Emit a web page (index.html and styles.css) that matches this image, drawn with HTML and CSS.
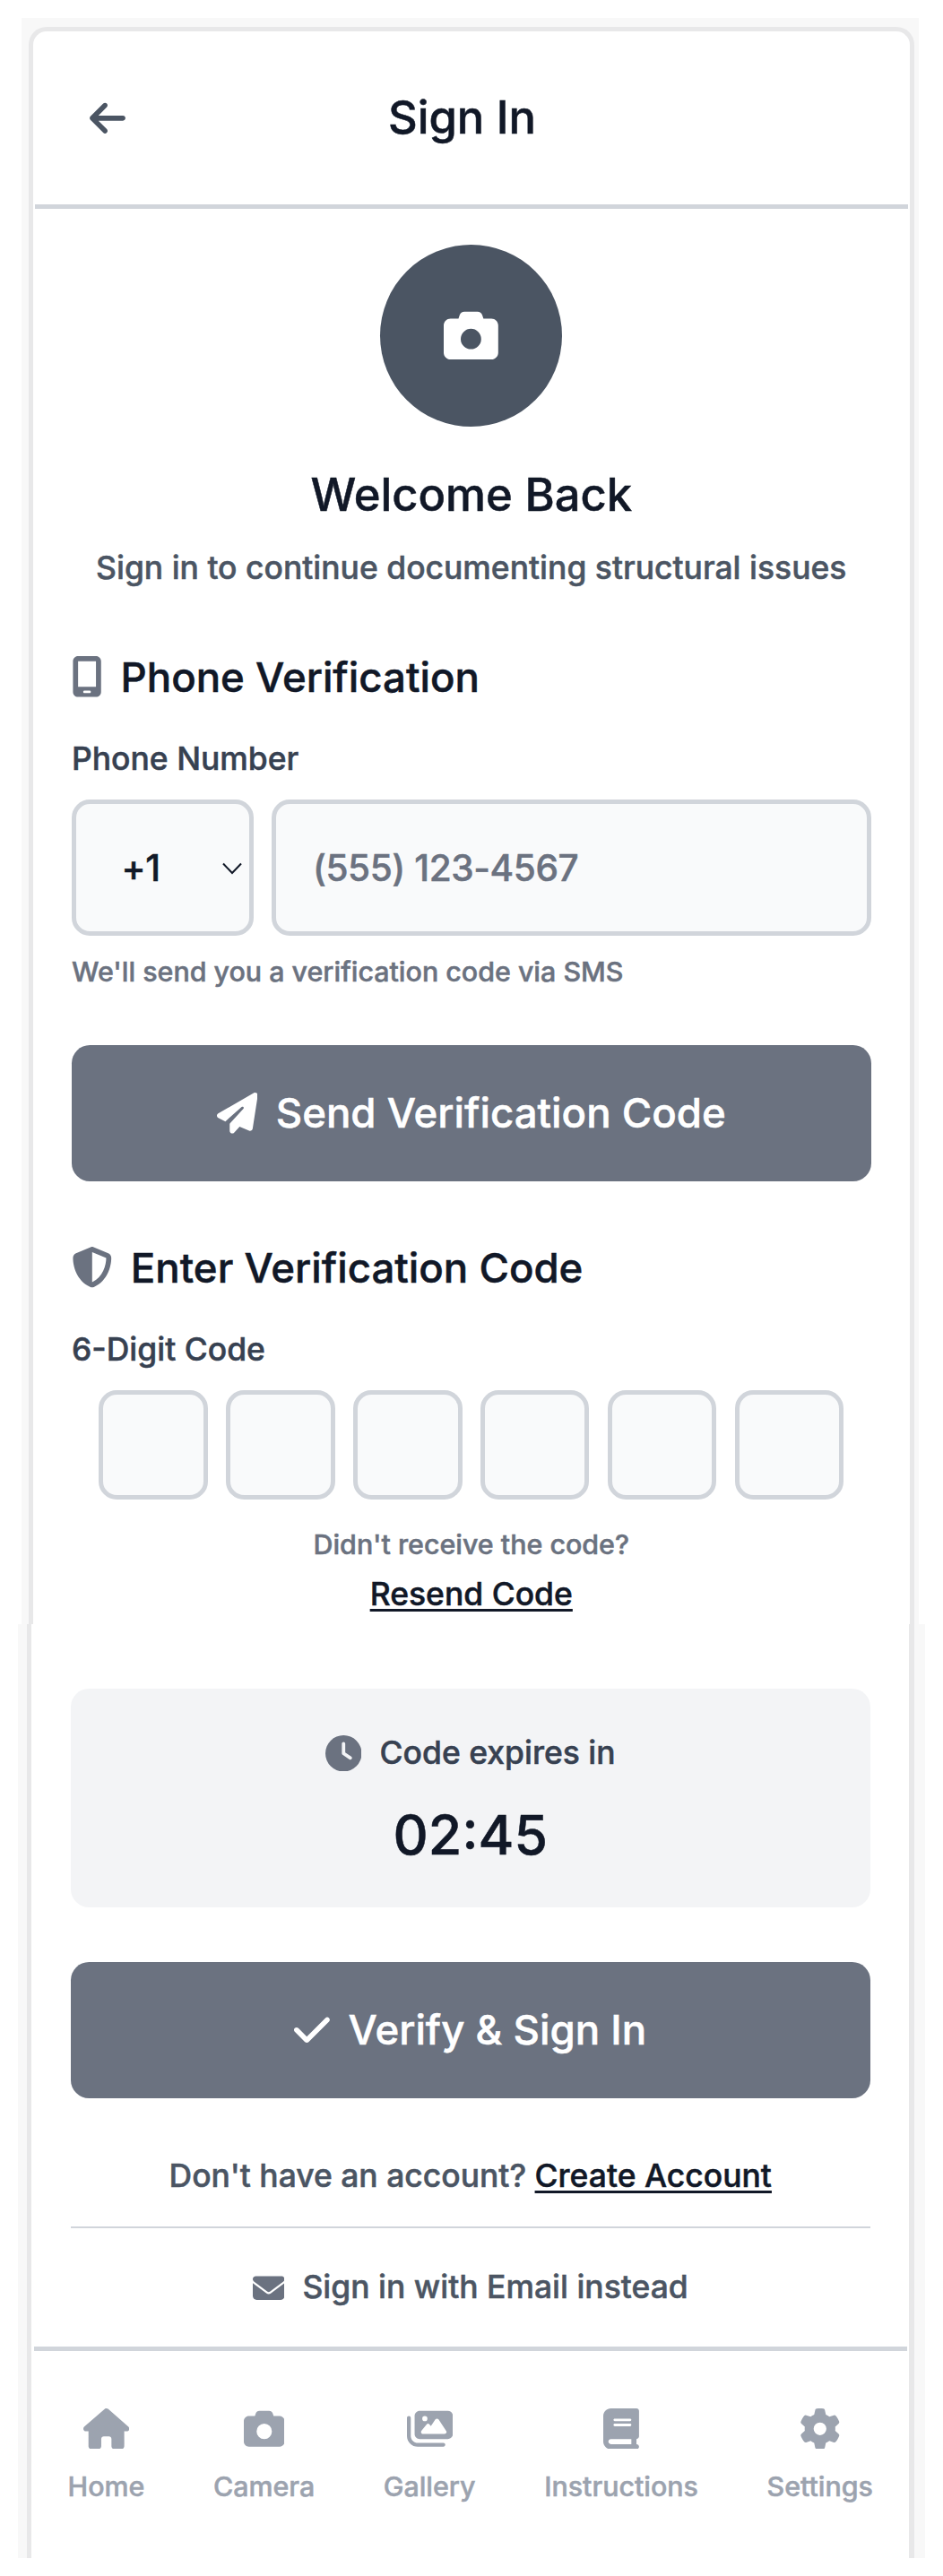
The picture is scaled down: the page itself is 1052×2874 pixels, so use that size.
FILE: index.html
```html
<!DOCTYPE html>
<html lang="en">
<head>
<meta charset="utf-8">
<title>Sign In</title>
<link rel="stylesheet" href="styles.css">
</head>
<body>
<div class="shell shell-upper">
  <div class="screen screen-upper">
    <header class="header">
      <svg class="icon icon-back" viewBox="0 0 448 512"><path d="M9.4 233.4c-12.5 12.5-12.5 32.8 0 45.3l160 160c12.5 12.5 32.8 12.5 45.3 0s12.5-32.8 0-45.3L109.2 288 416 288c17.7 0 32-14.3 32-32s-14.3-32-32-32l-306.7 0L214.6 118.6c12.5-12.5 12.5-32.8 0-45.3s-32.8-12.5-45.3 0l-160 160z"/></svg>
      <h1 class="header-title">Sign In</h1>
    </header>
    <main class="content">
      <section class="welcome">
        <div class="avatar">
          <svg class="icon icon-avatar" viewBox="0 0 512 512"><path d="M149.1 64.8L138.7 96H64C28.7 96 0 124.7 0 160V416c0 35.3 28.7 64 64 64H448c35.3 0 64-28.7 64-64V160c0-35.3-28.7-64-64-64H373.3L362.9 64.8C356.4 45.2 338.1 32 317.4 32H194.6c-20.7 0-39 13.2-45.5 32.8zM256 192a96 96 0 1 1 0 192 96 96 0 1 1 0-192z"/></svg>
        </div>
        <h2 class="welcome-title">Welcome Back</h2>
        <p class="welcome-text">Sign in to continue documenting structural issues</p>
      </section>

      <section class="phone">
        <h3 class="section-title">
          <svg class="icon icon-phone" viewBox="0 0 384 512"><path d="M16 64C16 28.7 44.7 0 80 0H304c35.3 0 64 28.7 64 64V448c0 35.3-28.7 64-64 64H80c-35.3 0-64-28.7-64-64V64zM144 448c0 8.8 7.2 16 16 16h64c8.8 0 16-7.2 16-16s-7.2-16-16-16H160c-8.8 0-16 7.2-16 16zM304 64H80V384H304V64z"/></svg>
          <span>Phone Verification</span>
        </h3>
        <label class="label" for="phone">Phone Number</label>
        <div class="phone-row">
          <div class="select-wrap">
            <select class="field select"><option>+1</option></select>
            <svg class="chevron" viewBox="0 0 22 14"><path d="M1 1.5 11 12 21 1.5"/></svg>
          </div>
          <input class="field input" id="phone" type="tel" placeholder="(555) 123-4567">
        </div>
        <p class="hint">We'll send you a verification code via SMS</p>
        <button class="button">
          <svg class="icon icon-send" viewBox="0 0 512 512"><path d="M498.1 5.6c10.1 7 15.4 19.1 13.5 31.2l-64 416c-1.5 9.7-7.4 18.2-16 23s-18.9 5.4-28 1.6L284 427.7l-68.5 74.1c-8.9 9.7-22.9 12.9-35.2 8.1S160 493.2 160 480V396.4c0-4 1.5-7.8 4.2-10.7L331.8 202.8c5.8-6.3 5.6-16-.4-22s-15.7-6.4-22-.7L106 360.8 17.7 316.6C7.1 311.3 .3 300.7 0 288.9s5.9-22.8 16.1-28.7l448-256c10.7-6.1 23.9-5.5 34 1.4z"/></svg>
          <span>Send Verification Code</span>
        </button>
      </section>

      <section class="code">
        <h3 class="section-title">
          <svg class="icon icon-shield" viewBox="0 0 512 512"><path d="M256 0c4.6 0 9.2 1 13.4 2.9L457.7 82.8c22 9.3 38.4 31 38.3 57.2c-.5 99.2-41.3 280.7-213.6 363.2c-16.7 8-36.1 8-52.8 0C57.3 420.7 16.5 239.2 16 140c-.1-26.2 16.3-47.9 38.3-57.2L242.7 2.9C246.8 1 251.4 0 256 0zm0 66.8V444.8C394 378 431.1 230.1 432 141.4L256 66.8l0 0z"/></svg>
          <span>Enter Verification Code</span>
        </h3>
        <label class="label">6-Digit Code</label>
        <div class="digits">
          <input class="digit" maxlength="1">
          <input class="digit" maxlength="1">
          <input class="digit" maxlength="1">
          <input class="digit" maxlength="1">
          <input class="digit" maxlength="1">
          <input class="digit" maxlength="1">
        </div>
        <p class="resend-hint">Didn't receive the code?</p>
        <p class="resend"><a class="link">Resend Code</a></p>
      </section>
    </main>
  </div>
</div>

<div class="shell shell-lower">
  <div class="screen screen-lower">
    <section class="content content-lower">
      <div class="timer">
        <div class="timer-label">
          <svg class="icon icon-clock" viewBox="0 0 512 512"><path d="M256 0a256 256 0 1 1 0 512A256 256 0 1 1 256 0zM232 120V256c0 8 4 15.5 10.7 20l96 64c11 7.4 25.9 4.4 33.3-6.7s4.4-25.9-6.7-33.3L280 243.2V120c0-13.3-10.7-24-24-24s-24 10.7-24 24z"/></svg>
          <span>Code expires in</span>
        </div>
        <div class="timer-value">02:45</div>
      </div>
      <button class="button">
        <svg class="icon icon-check" viewBox="0 0 448 512"><path d="M438.6 105.4c12.5 12.5 12.5 32.8 0 45.3l-256 256c-12.5 12.5-32.8 12.5-45.3 0l-128-128c-12.5-12.5-12.5-32.8 0-45.3s32.8-12.5 45.3 0L160 338.7 393.4 105.4c12.5-12.5 32.8-12.5 45.3 0z"/></svg>
        <span>Verify &amp; Sign In</span>
      </button>
      <p class="signup">Don't have an account? <a class="link">Create Account</a></p>
      <div class="email">
        <svg class="icon icon-mail" viewBox="0 0 512 512"><path d="M48 64C21.5 64 0 85.5 0 112c0 15.1 7.1 29.3 19.2 38.4L236.8 313.6c11.4 8.5 27 8.5 38.4 0L492.8 150.4c12.1-9.1 19.2-23.3 19.2-38.4c0-26.5-21.5-48-48-48H48zM0 176V384c0 35.3 28.7 64 64 64H448c35.3 0 64-28.7 64-64V176L294.4 339.2c-22.8 17.1-54 17.1-76.8 0L0 176z"/></svg>
        <span>Sign in with Email instead</span>
      </div>
    </section>
    <nav class="nav">
      <div class="nav-item">
        <svg class="icon icon-nav icon-wide" viewBox="0 0 576 512"><path d="M575.8 255.5c0 18-15 32.1-32 32.1h-32l.7 160.2c0 2.7-.2 5.4-.5 8.1V472c0 22.1-17.9 40-40 40H456c-1.1 0-2.2 0-3.3-.1c-1.4 .1-2.8 .1-4.2 .1H416 392c-22.1 0-40-17.9-40-40V448 384c0-17.7-14.3-32-32-32H256c-17.7 0-32 14.3-32 32v64 24c0 22.1-17.9 40-40 40H160 128.1c-1.5 0-3-.1-4.5-.2c-1.2 .1-2.4 .2-3.6 .2H104c-22.1 0-40-17.9-40-40V360c0-.9 0-1.9 .1-2.8V287.6H32c-18 0-32-14-32-32.1c0-9 3-17 10-24L266.4 8c7-7 15-8 22-8s15 2 21 7L564.8 231.5c8 7 12 15 11 24z"/></svg>
        <span>Home</span>
      </div>
      <div class="nav-item">
        <svg class="icon icon-nav" viewBox="0 0 512 512"><path d="M149.1 64.8L138.7 96H64C28.7 96 0 124.7 0 160V416c0 35.3 28.7 64 64 64H448c35.3 0 64-28.7 64-64V160c0-35.3-28.7-64-64-64H373.3L362.9 64.8C356.4 45.2 338.1 32 317.4 32H194.6c-20.7 0-39 13.2-45.5 32.8zM256 192a96 96 0 1 1 0 192 96 96 0 1 1 0-192z"/></svg>
        <span>Camera</span>
      </div>
      <div class="nav-item">
        <svg class="icon icon-nav icon-wide" viewBox="0 0 576 512"><path d="M160 32c-35.3 0-64 28.7-64 64V320c0 35.3 28.7 64 64 64H512c35.3 0 64-28.7 64-64V96c0-35.3-28.7-64-64-64H160zM396 138.7l96 144c4.9 7.4 5.4 16.8 1.2 24.6S480.9 320 472 320H328 280 200c-9.2 0-17.6-5.3-21.6-13.6s-2.9-18.2 2.9-25.4l64-80c4.6-5.7 11.4-9 18.7-9s14.2 3.3 18.7 9l17.3 21.6 56-84C360.5 132 368 128 376 128s15.5 4 20 10.7zM192 128a32 32 0 1 1 64 0 32 32 0 1 1 -64 0zM48 120c0-13.3-10.7-24-24-24S0 106.7 0 120V344c0 75.1 60.9 136 136 136H456c13.3 0 24-10.7 24-24s-10.7-24-24-24H136c-48.6 0-88-39.4-88-88V120z"/></svg>
        <span>Gallery</span>
      </div>
      <div class="nav-item">
        <svg class="icon icon-nav icon-narrow" viewBox="0 0 448 512"><path d="M96 0C43 0 0 43 0 96V416c0 53 43 96 96 96H384h32c17.7 0 32-14.3 32-32s-14.3-32-32-32V384c17.7 0 32-14.3 32-32V32c0-17.7-14.3-32-32-32H384 96zm0 384H352v64H96c-17.7 0-32-14.3-32-32s14.3-32 32-32zm32-240c0-8.8 7.2-16 16-16H336c8.8 0 16 7.2 16 16s-7.2 16-16 16H144c-8.8 0-16-7.2-16-16zm16 48H336c8.8 0 16 7.2 16 16s-7.2 16-16 16H144c-8.8 0-16-7.2-16-16s7.2-16 16-16z"/></svg>
        <span>Instructions</span>
      </div>
      <div class="nav-item">
        <svg class="icon icon-nav" viewBox="0 0 512 512"><path d="M495.9 166.6c3.2 8.7 .5 18.4-6.4 24.6l-43.3 39.4c1.1 8.3 1.7 16.8 1.7 25.4s-.6 17.1-1.7 25.4l43.3 39.4c6.9 6.2 9.6 15.9 6.4 24.6c-4.4 11.9-9.7 23.3-15.8 34.3l-4.7 8.1c-6.6 11-14 21.4-22.1 31.2c-5.9 7.2-15.7 9.6-24.5 6.8l-55.7-17.7c-13.4 10.3-28.2 18.9-44 25.4l-12.5 57.1c-2 9.1-9 16.3-18.2 17.8c-13.8 2.3-28 3.5-42.5 3.5s-28.7-1.2-42.5-3.5c-9.2-1.5-16.2-8.7-18.2-17.8l-12.5-57.1c-15.8-6.5-30.6-15.1-44-25.4L83.1 425.9c-8.8 2.8-18.6 .3-24.5-6.8c-8.1-9.8-15.5-20.2-22.1-31.2l-4.7-8.1c-6.1-11-11.4-22.4-15.8-34.3c-3.2-8.7-.5-18.4 6.4-24.6l43.3-39.4C64.6 273.1 64 264.6 64 256s.6-17.1 1.7-25.4L22.4 191.2c-6.9-6.2-9.6-15.9-6.4-24.6c4.4-11.9 9.7-23.3 15.8-34.3l4.7-8.1c6.6-11 14-21.4 22.1-31.2c5.9-7.2 15.7-9.6 24.5-6.8l55.7 17.7c13.4-10.3 28.2-18.9 44-25.4l12.5-57.1c2-9.1 9-16.3 18.2-17.8C227.3 1.2 241.5 0 256 0s28.7 1.2 42.5 3.5c9.2 1.5 16.2 8.7 18.2 17.8l12.5 57.1c15.8 6.5 30.6 15.1 44 25.4l55.7-17.7c8.8-2.8 18.6-.3 24.5 6.8c8.1 9.8 15.5 20.2 22.1 31.2l4.7 8.1c6.1 11 11.4 22.4 15.8 34.3zM256 336a80 80 0 1 0 0-160 80 80 0 1 0 0 160z"/></svg>
        <span>Settings</span>
      </div>
    </nav>
  </div>
</div>
</body>
</html>
```
FILE: styles.css
```css
* { box-sizing: border-box; }

body {
  margin: 0;
  padding: 20px 0;
  height: 2874px;
  background: #fff;
  color: #111827;
  font-family: Inter, "Liberation Sans", sans-serif;
  font-weight: 500;
  font-size: 35.47px;
  line-height: 50.67px;
  -webkit-text-stroke: 0.5px currentColor;
}

h1, h2, h3, p { margin: 0; font-weight: 500; }

.icon { display: block; flex: none; fill: currentColor; color: #6b7280; }

/* Device frame */
.shell { background: #f8f8f8; }
.shell-upper { height: 1792px; margin: 0 27px 0 24px; padding: 10px 5px 0 8px; }
.shell-lower { height: 1042px; margin: 0 20px; padding: 0 12px 0 10px; }
.screen { height: 100%; background: #fff; border: 5px solid #e8e8e9; border-bottom: 0; }
.screen-upper { border-radius: 20px 20px 0 0; }
.screen-lower { border-top: 0; border-right-width: 6px; }

/* Header */
.header {
  display: flex;
  align-items: center;
  height: 198px;
  margin: 0 2px;
  padding: 0 60.5px;
  border-bottom: 5px solid #d1d5db;
}
.icon-back { width: 40px; height: 45.6px; color: #4b5563; }
.header-title {
  flex: 1;
  padding: 0 87px 2px 0;
  margin-left: 26px;
  text-align: center;
  font-size: 50.67px;
  line-height: 71px;
}

.content { padding: 40.3px 43.5px 0 43px; }

/* Welcome */
.welcome { display: flex; flex-direction: column; align-items: center; }
.avatar {
  display: flex;
  align-items: center;
  justify-content: center;
  width: 203px;
  height: 203px;
  border-radius: 50%;
  background: #4b5563;
}
.icon-avatar { width: 60.8px; height: 60.8px; color: #fff; }
.welcome-title { margin-top: 40px; font-size: 50.67px; line-height: 71px; }
.welcome-text { margin-top: 21.7px; color: #4b5563; white-space: nowrap; }

/* Sections */
.section-title {
  display: flex;
  align-items: center;
  gap: 20.27px;
  font-size: 45.6px;
  line-height: 71px;
}
.phone { margin-top: 60px; }
.code { margin-top: 60.8px; }
.icon-phone { width: 34.2px; height: 45.6px; }
.icon-shield { width: 45.6px; height: 45.6px; }
.label { display: block; margin-top: 31.7px; color: #374151; }

.phone-row { display: flex; gap: 20.8px; margin-top: 19px; }
.select-wrap { position: relative; width: 202.6px; }
.field {
  display: block;
  width: 100%;
  height: 152px;
  margin: 0;
  border: 5px solid #d1d5db;
  border-radius: 20.3px;
  background: #f9fafb;
  color: #111827;
  font: 500 40.53px/60px Inter, "Liberation Sans", sans-serif;
  letter-spacing: -0.4px;
  -webkit-text-stroke: inherit;
}
.select { appearance: none; padding: 2px 0 0 50.5px; }
.chevron {
  position: absolute;
  right: 13px;
  top: 70px;
  width: 22px;
  height: 14px;
  fill: none;
  stroke: #111827;
  stroke-width: 2;
}
.input { flex: 1; min-width: 0; padding: 0 40px 0 40.5px; }
.input::placeholder { color: #6b7280; opacity: 1; }
.hint { margin-top: 20px; font-size: 30.4px; line-height: 40.5px; color: #6b7280; }

.button {
  display: flex;
  align-items: center;
  justify-content: center;
  gap: 20.27px;
  width: 100%;
  height: 152px;
  margin-top: 61.3px;
  padding: 0;
  border: 0;
  border-radius: 20.3px;
  background: #6b7280;
  color: #fff;
  font: 500 45.6px/71px Inter, "Liberation Sans", sans-serif;
  -webkit-text-stroke: 0.5px currentColor;
}
.button .icon { color: #fff; }
.icon-send { width: 45.6px; height: 45.6px; }
.icon-check { width: 39.9px; height: 45.6px; }

/* Code entry */
.digits { display: flex; justify-content: center; gap: 20.27px; margin-top: 19.4px; }
.digit {
  width: 121.6px;
  height: 121.6px;
  margin: 0;
  padding: 0;
  border: 5px solid #d1d5db;
  border-radius: 20.3px;
  background: #f9fafb;
}
.resend-hint {
  margin-top: 30px;
  text-align: center;
  color: #6b7280;
  font-size: 30.4px;
  line-height: 40.5px;
}
.resend { margin-top: 11px; text-align: center; }
.link { color: #111827; text-decoration: underline; text-decoration-thickness: 2.5px; text-underline-offset: 3.5px; }

/* Lower half */
.content-lower { padding: 72px 43px 0 43.5px; }
.timer {
  height: 243.7px;
  padding-top: 46.3px;
  border-radius: 20.3px;
  background: #f3f4f6;
  text-align: center;
}
.timer-label {
  display: flex;
  align-items: center;
  justify-content: center;
  gap: 20.27px;
  color: #374151;
}
.timer-label span { padding-top: 1px; }
.icon-clock { width: 40.5px; height: 40.5px; }
.timer-value { margin-top: 25px; font-size: 60.8px; line-height: 81px; }
.signup {
  margin-top: 62px;
  padding-bottom: 30.4px;
  border-bottom: 2.5px solid #d1d5db;
  text-align: center;
  color: #4b5563;
}
.email {
  display: flex;
  align-items: center;
  justify-content: center;
  gap: 20.27px;
  margin-top: 41px;
  color: #4b5563;
}
.icon-mail { width: 35.47px; height: 35.47px; }

/* Bottom navigation */
.nav {
  display: flex;
  justify-content: space-between;
  margin: 40.7px 2px 0 3px;
  padding: 63.2px 38px 0 37.5px;
  border-top: 5px solid #d1d5db;
  color: #9ca3af;
  font-size: 30.4px;
  line-height: 40.5px;
}
.nav-item { display: flex; flex-direction: column; align-items: center; gap: 22px; }
.icon-nav { width: 45.6px; height: 45.6px; color: #9ca3af; }
.icon-wide { width: 51.3px; }
.icon-narrow { width: 39.9px; }
```
